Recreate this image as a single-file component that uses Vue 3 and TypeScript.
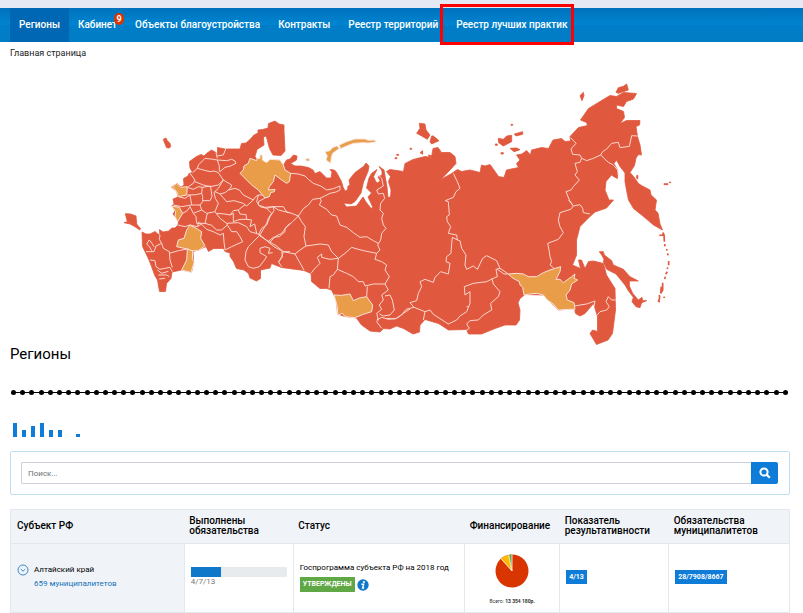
<script setup lang="ts">
import { ref } from 'vue'

interface NavItem {
  label: string
  badge?: number
  active?: boolean
  marked?: boolean
}

const navItems: NavItem[] = [
  { label: 'Регионы', active: true },
  { label: 'Кабинет', badge: 9 },
  { label: 'Объекты благоустройства' },
  { label: 'Контракты' },
  { label: 'Реестр территорий' },
  { label: 'Реестр лучших практик', marked: true },
]

const query = ref('')
const dotCount = 85
const bars = [14, 7, 11, 14, 7, 7, 0, 3]

// European part: outlines and borders
const westOrange = [
  'M187 320 200 310 212 322 232 320 230 345 205 350 200 335Z',
  'M184 378 208 382 218 400 203 425 195 410 197 395Z',
  'M240 435 262 447 275 455 272 475 285 497 265 512 240 512 232 507 200 500 205 480 222 475 230 450Z',
  'M232 507 248 513 247 540 253 545 243 577 215 570 230 540Z',
]
const westBorders =
  'M248 278 262 265 266 254 280 240 285 235 310 238 322 240M262 265 280 270 300 275 312 273 325 278 340 300M322 240 328 258 328 275' +
  'M322 240 350 242 365 238 375 243 378 250 362 258 345 262 330 275M240 280 255 300 250 310 235 320M255 305 280 315 300 320 325 315 340 300' +
  'M318 218 322 235M322 228 340 225 348 205M340 300 365 315 362 324 355 330 375 325 388 330 400 345 430 360 437 350 445 345 460 345' +
  'M340 300 325 325 312 337 316 355 325 370M315 335 330 342 345 338 355 330M330 342 350 365 372 362 400 370 410 378 430 360' +
  'M232 322 250 328 265 320 277 322 275 340 258 344 240 345 232 345M277 322 302 318 M275 340 278 350 278 365 270 375 245 375 240 345' +
  'M278 362 300 362 306 350 302 320M205 350 225 355 240 345M190 375 215 380 245 375M240 380 250 400 275 390 270 375M275 390 290 400 315 395 325 370' +
  'M218 400 232 392 240 380M250 400 258 410 260 430 285 430 292 400M315 395 330 415 350 430 352 435M320 400 345 402 360 405 370 392 385 390 400 378 405 375' +
  'M360 405 370 400 370 425 390 418 410 418 425 420 420 440 434 432 440 460M385 390 390 402 408 404 410 418M285 430 305 436 320 450 335 450 352 435' +
  'M270 428 290 448 310 455 330 465 340 460 342 485 345 510M352 435 365 455 380 455 390 470 398 485 365 500 345 510' +
  'M350 430 385 428 410 440 420 455 438 460 450 465M445 345 440 365 450 380 470 385 490 380 520 380 530 396 540 398M470 385 485 400 475 415 470 430 450 465' +
  'M450 465 480 490 492 500 520 515 540 515M450 465 435 480 415 500 408 515 405 540 415 560 430 565 448 560 460 545 470 530 450 518 450 505 465 500 480 505 475 520 488 518' +
  'M480 487 495 470 515 460 530 440 540 430M520 515 515 530 508 545M203 435 225 440 240 435 262 440 267 425M262 440 275 432' +
  'M150 465 148 478 155 490 138 498 132 515 108 515M118 480 110 492 118 500 125 512M118 480 126 490 132 500M155 490 160 505 178 515 180 540 187 562' +
  'M120 540 135 542 138 560 150 568 180 562 187 575M142 570 155 580 175 574M145 585 170 585 178 590M148 597 165 595M178 520 205 512 232 507'

// Western Siberia and the Arctic coast
const midOrange = [
  'M60 145 80 152 82 145 90 145 90 135 97 135 97 150 110 158 120 148 150 150 160 165 165 180 182 190 178 215 170 220 155 210 135 195 130 215 118 230 115 240 135 238 133 245 122 248 118 260 105 264 85 240 65 225 30 190 40 180 42 168 55 160Z',
  'M285 125 300 122 307 113 320 108 328 115 308 130 304 142 302 160 288 150 292 138Z',
  'M328 105 350 95 375 87 405 87 415 91 435 90 437 96 415 99 400 98 370 100 350 108 332 116Z',
  'M225 148 238 145 238 153 230 153Z',
  'M312 555 335 556 360 552 370 572 388 564 410 560 428 585 425 605 400 613 375 623 345 620 338 610 323 615 322 590Z',
]
const midBorders =
  'M182 190 205 192 225 198 235 208 250 220 272 228 290 240 310 236 330 228 330 240 318 246 300 250 270 265 274 273 268 285 290 298 305 315 320 318 330 345 350 352 370 368 390 382 410 380 430 392 445 400' +
  'M270 265 248 268 235 285 220 296 205 318 188 335 165 355 165 365 148 380 130 382 115 394M205 318 185 310 165 305 145 300 130 290 105 292 85 285 85 275 105 264M130 290 132 302 120 320 110 345 95 355 85 375' +
  'M205 318 215 335 226 350 222 380 228 408 210 420 195 432 160 425 140 408 115 394 90 378M228 408 250 405 270 402 295 405 305 425 325 445 300 448 275 442 275 432 262 442 270 460 255 475 243 490' +
  'M195 432 205 450 222 480M325 445 345 430 365 412 385 418 410 424 440 430 450 420 443 405 452 390 455 370 468 355 460 345 455 325 460 310 450 300 452 280 464 265 460 250 445 252 440 240 460 228 455 205 445 195' +
  'M440 430 435 448 455 455 470 465 465 480 478 500 465 522 430 522 405 528 400 515 385 515 370 500 350 490 322 478 325 445M322 478 310 495 300 500 297 535M410 560 412 530' +
  'M465 522 475 540 455 555 460 570 448 585 455 598 440 610 445 630 440 635 455 655M448 612 460 618 480 615 493 600 487 570 480 555 465 558M440 630 455 622 475 628 500 625 520 610 540 597' +
  'M155 425 158 440 145 455 155 470'

// Eastern Siberia
const eastBorders =
  'M50 625 75 627 95 615 108 598 132 592 120 578 140 572 145 550 155 530 150 515 165 508 190 517 195 502 212 485 235 492 240 460 228 455 230 440 243 430 245 400 247 382 262 390 260 375 235 370 242 350 232 335 230 320 238 315 235 275 226 272 250 262 258 245 270 235 262 215 250 190' +
  'M132 592 165 605 180 600 190 613 235 642 260 630 270 618 290 605 300 580 300 545 285 555 283 530 310 520 350 515 370 505 382 500 378 478 390 475M165 605 160 630' +
  'M262 390 270 392 275 415 288 435 285 465 290 478 310 468 322 478 338 445 350 437 380 452 390 475 415 492M366 505 370 522 390 545 385 560 362 580 365 600 340 615 325 630 300 632 290 642 298 655 288 662M290 590 295 590M382 478 402 492 415 492'

// Far East
const northBorders =
  'M182 188 198 205 183 222 188 238 210 240 215 250 210 262 195 265 202 290 195 300 208 315 190 335 183 345 168 350 178 375 188 390M215 250 230 257 250 250 272 240 278 230 290 222 305 205 325 202 330 218 358 214 365 182 383 183M272 240 295 262 310 270 323 285 325 300'
const farBorders =
  'M176 0 190 18 210 14 218 25 220 38 240 42M190 18 182 28 150 38 145 60 150 80 160 98 145 118 113 130 118 155 120 170 125 185 120 195 132 205M193 318 230 312 255 303 252 320M262 345 270 335 290 330 298 320 288 305 295 290 305 300 317 300'
const farOrange =
  'M-5 222 20 220 40 222 55 230 80 230 100 218 120 210 152 200 150 215 138 238 150 238 160 248 185 230 195 222 192 235 203 240 185 252 180 270 168 285 172 300 192 308 195 328 175 328 145 330 130 312 112 300 100 285 80 280 60 282 42 285 38 262 30 255 28 245 15 238 5 232Z'
const kurils = 'M460 97 458 108M448 106 462 104 463 122M463 120 463 125M464 132 465 139M471 147 470 152M473 160 474 166M476 183 476 196M473 202 472 207M472 215 467 222M466 230 464 237M458 248 458 270 452 280 454 260M462 290 463 294M448 285 449 294 445 306M450 305 447 305'

const mainland =
  'M142 232 L146 234 150 234 155 231.5 159 235 160 238 159.5 229.5 163 232 168.5 231 172 228 175 228 178 225 178.5 221 173 214 176 209 171.5 206 174 204 173 199 178 197 177 192 171.5 187 177 183.5 181 187 184 185 183.5 178.5 188 176 189 173.5 192.5 172.5 190 168 189.5 161.5 196.5 156.5 201 154.5 204 156 206.5 153.5 211.5 150 216 152.5 217.5 156.5 217.5 147.5 225 149 240 149 241.5 143.5 246 143 250 139.5 254 135 258 133 258 130 262.5 129.5 268 128 268.5 123.5 275 121 279 124 284 125 284 131 285 151 281 155.5 273 155 269.5 148.5 267 139 266 136 263.5 137 264 145 257 149.5 255 156.5 258 162 283.5 165 286.5 160 290 159 293.5 155 297 156 296.5 160 290.5 163.5 295 166 301 166 308.5 167.5 313 170 315 173.5 320 171.5 326.5 178 331 178 332 172 330 169.5 334 170 336 171.5 341.5 181.5 343 187 345 191 347.5 190 348 186 350 185 349 180 355 172.5 363.5 166.5 366 163 369 166 368 171.5 363.5 182 361 193 355 201.5 351 204 343.5 203 346.5 207 356.5 206 363 197 366 202 371.5 209 372.5 206.5 368 197 371.5 193 366.5 188 369 178 371.5 173.5 377 169.5 373.5 176.5 376 182 378 183 380 180.5 378 177 382 175 382 171 379 166.5 384 170 387 187 388 197.5 390.5 197 391 190 388.5 181.5 390.5 176.5 386.5 171.5 390 169.5 403.5 171.5 405 163.5 413 159.5 425 156.5 431.5 157.5 433 148.5 438 147.5 441.5 152.5 450 152.5 455 156.5 456 163.5 450 170 441 179.5 451.5 173.5 457.5 169.5 461.5 171.5 470 170 480 172.5 481.5 165 485 166 490 164.5 494 170 498.5 176.5 504 177.5 506.5 170 518.5 167.5 516.5 163.5 520 160 516.5 155 522 154 526.5 150.5 530.5 155 531.5 150 541.5 147.5 548.5 148.5 553 140 561.5 138.5 565 141.5 570.5 141 570 136.5 578.5 127.5 587.5 125.5 586.5 122.5 580.5 120 588.5 108.5 600 101.5 610 95.5 616.5 96.5 623.5 92.5 636.5 93.5 633.5 99 626.5 101.5 623.5 106.5 616.5 105 616.5 108.5 623.5 111.5 624.5 117.5 620 123.5 626.5 120.5 640 120.5 639.5 125 636 126.5 637.5 136.5 640 145 641.5 155 638.5 154.5 636 158 634.5 165.5 630 172.5 633.5 176.5 638.5 183.5 641.5 185.5 650 190 651 195 656.5 200 655 210 658 213 660 224 662.5 230 653.5 225 643.5 216.5 633.5 208.5 628.5 200 626.5 190 625 181.5 625 173 620 166.5 616.5 160 614 163.5 617.5 170 617.5 178.5 613.5 176.5 611.5 175 606 181.5 605 190 609 200 613.5 200 606.5 208 595 212 590 216.5 580 226.5 576.5 240 576.5 255 572.5 265 580.5 268.5 578.5 260 581.5 260 585 268.5 588.5 261.5 593.5 261 603.5 263.5 606.5 275 615 288.5 615.5 310 612.5 333.5 608 340 596.5 344.5 590 333.5 592.5 330 597.5 331.5 597.5 316.5 593.5 303.5 585 313.5 580 316 575.5 313.5 574.5 308.5 558.5 310 543.5 295 525 294.5 520 298.5 518 303 520 310 519.5 320 516 325 505 325 495 328.5 481.5 334 468.5 334 466.5 329.5 448.5 330 438.5 323.5 425 319.5 420 325 419.5 332 413 334 403.5 328.5 396.5 326 390 329 383.5 328.5 380 332 370 331 361.5 325 356.5 318 345 316.5 337.5 314 336.5 300 331.5 290 326.5 288.5 320 288.5 311.5 281.5 311 273.5 304 270.5 281.5 267.5 271.5 263.5 270 268 260.5 270 260.5 278.5 256.5 281 250 278 248.5 273.5 244 270 236.5 268.5 233.5 261.5 230 256.5 230 253 225 251.5 223.5 248.5 213.5 248.5 208.5 251.5 206 246.5 198.5 250 193 251.5 193.5 263.5 191.5 272 181.5 270 172 272 171 278.5 166.5 283.5 165.5 291.5 159.5 291.5 157.5 280 155 276 151.5 266.5 149 260 146 253.5 142.5 246.5Z'
</script>

<template>
  <div class="page">
    <header class="topbar">
      <nav class="nav" aria-label="Основное меню">
        <a
          v-for="item in navItems"
          :key="item.label"
          href="#"
          class="nav-link"
          :class="{ active: item.active, marked: item.marked }"
        >{{ item.label }}<span v-if="item.badge" class="badge">{{ item.badge }}</span></a>
      </nav>
    </header>

    <main class="content">
      <a class="crumb" href="#">Главная страница</a>

      <svg class="map" viewBox="10 62 780 284" role="img" aria-label="Карта регионов">
        <path class="land" :d="mainland" />
        <g transform="translate(110 80) scale(.33333)">
          <path class="land" d="M160 178 168 174 172 182 180 190 182 200 178 204 170 203 164 190ZM42 428 52 425 46 401 62 402 78 408 80 432 92 447 88 449 75 440 60 432Z" />
          <path v-for="d in westOrange" :key="d" class="gold edge" :d="d" />
          <path class="border" :d="westBorders" />
        </g>
        <g transform="translate(230 110) scale(.33333)">
          <path v-for="d in midOrange" :key="d" class="gold edge" :d="d" />
          <path class="border" :d="midBorders" />
        </g>
        <g transform="translate(370 110) scale(.33333)">
          <path class="land" d="M140 70 150 55 148 40 165 42 168 60 180 75 172 88 155 78ZM180 95 185 78 190 78 207 92 185 102ZM385 85 400 88 410 78 425 76 425 95 400 108 386 98ZM433 72 458 65 458 73 438 78ZM420 115 440 114 450 119 432 125ZM150 128 158 122 158 133ZM175 135 188 138 178 142ZM120 115h5v3h-5ZM80 133h6v3h-6ZM75 143h6v3h-6ZM423 43h5v3h-5ZM376 102h6v4h-6ZM393 128h7v4h-7Z" />
          <path class="border" :d="eastBorders" />
        </g>
        <g transform="translate(510 75) scale(.33333)">
          <path class="land" d="M210 62 220 52 222 62 216 77ZM318 52 325 38 340 34 350 27 355 45 340 50 325 55ZM381 300 384 302 383 313 379 308ZM462 326h12v3h-12ZM478 321h4v2h-4Z" />
          <path class="border" :d="northBorders" />
        </g>
        <g transform="translate(510 200) scale(.33333)">
          <path class="land" d="M268 155 280 155 283 165 305 182 310 195 340 208 360 230 385 243 358 243 358 258 368 280 385 300 396 292 398 302 410 302 395 308 390 323 378 320 366 305 370 292 355 272 345 255 318 222 290 208 280 185 282 178 275 165Z" />
          <path class="gold edge" :d="farOrange" />
          <path class="border" :d="farBorders" />
          <path class="kurils" :d="kurils" />
        </g>
      </svg>

      <h1 class="title">Регионы</h1>

      <div class="scale" aria-hidden="true">
        <i v-for="n in dotCount" :key="n" class="dot"></i>
      </div>

      <div class="bars" aria-hidden="true">
        <i v-for="(h, i) in bars" :key="i" class="bar" :style="{ height: h + 'px' }"></i>
      </div>

      <form class="search" @submit.prevent>
        <input v-model="query" class="search-input" type="text" placeholder="Поиск..." aria-label="Поиск" />
        <button class="search-btn" type="submit" aria-label="Найти">
          <svg viewBox="0 0 12 12" width="12" height="12">
            <circle cx="5" cy="5" r="3.6" fill="none" stroke="#fff" stroke-width="2" />
            <path d="M7.6 7.6 10.8 10.8" stroke="#fff" stroke-width="2.2" />
          </svg>
        </button>
      </form>

      <table class="grid">
        <colgroup>
          <col class="c1" /><col class="c2" /><col class="c3" /><col class="c4" /><col class="c5" /><col class="c6" />
        </colgroup>
        <thead>
          <tr>
            <th scope="col">Субъект РФ</th>
            <th scope="col">Выполнены обязательства</th>
            <th scope="col">Статус</th>
            <th scope="col">Финансирование</th>
            <th scope="col">Показатель результативности</th>
            <th scope="col">Обязательства муниципалитетов</th>
          </tr>
        </thead>
        <tbody>
          <tr>
            <td class="subject">
              <div class="subject-row">
                <button class="expand" type="button" aria-label="Развернуть">
                  <svg viewBox="0 0 12 12" width="12" height="12" fill="none" stroke="#3b8ac9">
                    <circle cx="6" cy="6" r="5" />
                    <path d="M3.8 5.2 6 7.2 8.2 5.2" />
                  </svg>
                </button>
                <div class="subject-text">
                  <span>Алтайский край</span>
                  <a href="#">659 муниципалитетов</a>
                </div>
              </div>
            </td>
            <td>
              <div class="progress"><div class="progress-fill"></div></div>
              <div class="progress-label">4/7/13</div>
            </td>
            <td>
              <div class="program">Госпрограмма субъекта РФ на 2018 год</div>
              <div class="status">
                <span class="approved">УТВЕРЖДЕНЫ</span>
                <svg viewBox="0 0 12 12" width="12" height="12" aria-hidden="true">
                  <circle cx="6" cy="6" r="5.7" fill="#0f78c8" />
                  <circle cx="6.9" cy="3" r="1.1" fill="#fff" />
                  <path d="M4.4 5.2H6.7L5.6 9H7.2" fill="none" stroke="#fff" stroke-width="1.4" />
                </svg>
              </div>
            </td>
            <td class="finance">
              <svg viewBox="-17 -17 34 34" width="34" height="34" aria-hidden="true">
                <circle r="16.5" fill="#d83500" />
                <path d="M0 0-11-12.3A16.5 16.5 0 0 1-3.3-16.2Z" fill="#ffb900" />
                <path d="M0 0-3.3-16.2A16.5 16.5 0 0 1 0-16.5Z" fill="#61a744" />
                <path d="M-11-12.3 0 0-3.3-16.2M0 0V-16.5" fill="none" stroke="#fff" stroke-width=".8" />
              </svg>
              <div class="total">Всего: <b>13 354 180р.</b></div>
            </td>
            <td><span class="tag">4/13</span></td>
            <td><span class="tag">28/7908/8667</span></td>
          </tr>
        </tbody>
      </table>
    </main>
  </div>
</template>

<style>
body {
  margin: 0;
  background: #fff;
}
</style>

<style scoped>
.page {
  font-family: Roboto, 'Liberation Sans', sans-serif;
  font-size: 9px;
  line-height: 12px;
  color: #000;
}
a {
  text-decoration: none;
}
.topbar {
  border-top: 8px solid #e4e9f3;
  background: linear-gradient(#0071bc, #0085d1 50%, #007dc8 51%, #007dc4);
}
.nav {
  display: flex;
  padding: 0 10px;
}
.nav-link {
  position: relative;
  padding: 0 9px;
  line-height: 34px;
  font-size: 10px;
  font-weight: 500;
  color: #fff;
  white-space: nowrap;
}
.nav-link.active {
  background: #0067b4;
}
.nav-link.marked::after {
  content: '';
  position: absolute;
  inset: -4px 2px -3px -7px;
  border: 3px solid #f00;
}
.badge {
  position: absolute;
  top: 5px;
  right: 2px;
  width: 10px;
  height: 12px;
  border-radius: 5px;
  background: #d83500;
  font-size: 9px;
  line-height: 12px;
  font-weight: 700;
  text-align: center;
}
.content {
  padding: 5px 13px 0 10px;
}
.crumb {
  display: block;
  color: #222;
}
.map {
  display: block;
  width: 100%;
  margin-top: 3px;
}
.land {
  fill: #e0583d;
  stroke: #e0583d;
  stroke-width: .8;
  stroke-linejoin: round;
  vector-effect: non-scaling-stroke;
}
.gold {
  fill: #e99d48;
}
.edge {
  stroke: #fbe3dc;
  stroke-width: 3;
}
.border {
  fill: none;
  stroke: #fbd8d0;
  stroke-width: 3;
  stroke-linejoin: round;
}
.kurils {
  fill: none;
  stroke: #e0583d;
  stroke-width: 5;
}
.title {
  margin: 0;
  font-size: 15px;
  line-height: 16px;
  font-weight: 400;
}
.scale {
  display: flex;
  align-items: center;
  justify-content: space-between;
  height: 5px;
  margin: 28px 2px 0 1px;
  background: linear-gradient(#000, #000) center / 100% 1px no-repeat;
}
.dot {
  width: 5px;
  height: 5px;
  border-radius: 50%;
  background: #000;
}
.bars {
  display: flex;
  align-items: flex-end;
  gap: 5px;
  height: 16px;
  margin: 26px 3px 14px;
}
.bar {
  width: 4px;
  background: #0f7dd8;
}
.search {
  display: flex;
  padding: 10px 11px 10px 10px;
  border: 1px solid #c0dff5;
  border-radius: 2px;
}
.search-input {
  flex: 1;
  min-width: 0;
  height: 22px;
  box-sizing: border-box;
  padding: 0 6px;
  border: 1px solid #ccd1d9;
  border-right: 0;
  border-radius: 2px 0 0 2px;
  font-family: inherit;
  font-size: 8px;
  outline: none;
}
.search-input::placeholder {
  color: #6b7076;
}
.search-btn {
  display: flex;
  align-items: center;
  justify-content: center;
  width: 27px;
  height: 22px;
  padding: 0;
  border: 0;
  border-radius: 0 2px 2px 0;
  background: #0f7dd8;
}
.grid {
  width: 100%;
  margin-top: 14px;
  table-layout: fixed;
  border-collapse: collapse;
}
.c1 { width: 22.3%; }
.c2 { width: 14%; }
.c3 { width: 22%; }
.c4 { width: 12.2%; }
.c5 { width: 14%; }
.c6 { width: 15.5%; }
.grid th {
  box-sizing: border-box;
  height: 34px;
  padding: 0 5px 1px;
  background: #f0f4f8;
  border-top: 1px solid #e2e8ed;
  border-bottom: 1px solid #e2e8ed;
  font-size: 10px;
  line-height: 10px;
  font-weight: 500;
  text-align: left;
}
.grid th:first-child {
  padding-left: 6px;
  border-left: 1px solid #e2e8ed;
}
.grid th:last-child {
  border-right: 1px solid #e2e8ed;
}
.grid td {
  box-sizing: border-box;
  height: 69px;
  padding: 0 6px 2px;
  border: 1px solid #e2e8ed;
  vertical-align: middle;
}
.grid .subject {
  background: #f0f4f8;
}
.subject-row {
  display: flex;
  align-items: flex-start;
  gap: 5px;
}
.expand {
  display: flex;
  padding: 0;
  border: 0;
  background: none;
}
.subject-text {
  display: grid;
  gap: 2px;
  font-size: 8px;
}
.subject-text a {
  color: #1470b8;
}
.progress {
  height: 10px;
  background: #e7ebee;
}
.progress-fill {
  width: 32%;
  height: 100%;
  background: #0f78c8;
}
.progress-label {
  font-size: 8px;
  line-height: 10px;
  color: #777;
}
.program {
  font-size: 8px;
  white-space: nowrap;
}
.status {
  display: flex;
  align-items: center;
  gap: 2px;
  margin-top: 3px;
}
.approved {
  padding: 0 3px;
  background: #5fa845;
  color: #fff;
  font-size: 7px;
  line-height: 15px;
  font-weight: 700;
}
.grid .finance {
  padding-bottom: 0;
  text-align: center;
}
.finance svg {
  display: block;
  margin: 4px auto 8px;
}
.total {
  font-size: 5px;
  line-height: 10px;
  color: #333;
}
.tag {
  display: inline-block;
  padding: 0 3px;
  background: #0f7dd8;
  color: #fff;
  font-size: 7px;
  line-height: 14px;
  font-weight: 700;
}
</style>
